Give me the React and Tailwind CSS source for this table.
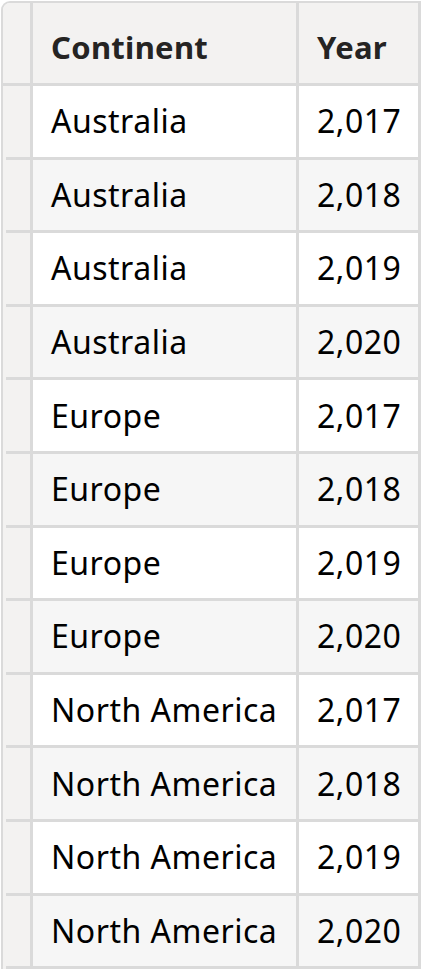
import React from "react";

const rows = [
  ["Australia", "2,017"],
  ["Australia", "2,018"],
  ["Australia", "2,019"],
  ["Australia", "2,020"],
  ["Europe", "2,017"],
  ["Europe", "2,018"],
  ["Europe", "2,019"],
  ["Europe", "2,020"],
  ["North America", "2,017"],
  ["North America", "2,018"],
  ["North America", "2,019"],
  ["North America", "2,020"],
];

export default function App() {
  return (
    <div className="w-[421px] h-[970px] bg-white overflow-hidden" style={{ fontFamily: '"Noto Sans", "Open Sans", sans-serif' }}>
      <div className="ml-[1px] mt-[1px] w-[420px] border-l-2 border-t-2 border-r-3 border-[#dadada] rounded-tl-[9px] overflow-hidden">
        {/* header */}
        <div className="flex h-[83px] border-b-3 border-[#dadada] bg-[#f3f2f1]">
          <div className="w-[27px] shrink-0" />
          <div className="w-[266px] shrink-0 border-l-3 border-[#dadada] pl-[18px] pt-[24px] text-[31px] leading-[40px] tracking-[0.3px] font-bold text-[#252423] whitespace-nowrap">
            Continent
          </div>
          <div className="flex-1 border-l-3 border-[#dadada] pl-[18px] pt-[24px] text-[31px] leading-[40px] tracking-[0.3px] font-bold text-[#252423] whitespace-nowrap">
            Year
          </div>
        </div>
        {rows.map(([c, y], i) => (
          <div key={i} className={`flex h-[73.6px] ${i % 2 === 1 ? "bg-[#f6f6f6]" : "bg-white"}`}>
            <div className="w-[27px] shrink-0 bg-[#f3f2f1] pl-[3px] flex">
              <div className="flex-1 border-b-3 border-[#dadada]" />
            </div>
            <div className="w-[266px] shrink-0 border-l-3 border-b-3 border-[#dadada] pl-[18px] flex items-center text-[32px] tracking-[0.5px] text-black whitespace-nowrap">
              {c}
            </div>
            <div className="flex-1 border-l-3 border-b-3 border-[#dadada] pl-[18px] flex items-center text-[32px] tracking-[0.5px] text-black whitespace-nowrap">
              {y}
            </div>
          </div>
        ))}
      </div>
    </div>
  );
}
